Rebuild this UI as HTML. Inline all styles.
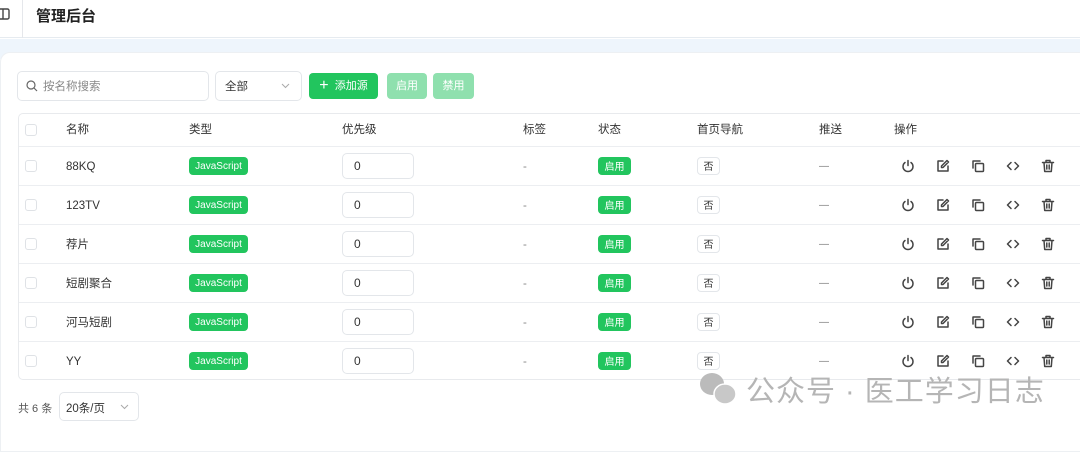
<!DOCTYPE html>
<html><head><meta charset="utf-8"><style>
*{box-sizing:border-box;margin:0;padding:0}
body{width:1080px;height:433px;overflow:hidden;background:#fff;font-family:"Liberation Sans","Noto Sans CJK SC",sans-serif;font-size:12px;color:#333;position:relative}
.hdr{position:absolute;left:0;top:0;width:1080px;height:38px;border-bottom:1px solid #e6ebf0;background:#fff}
.hdr .sep{position:absolute;left:22px;top:0;width:1px;height:38px;background:#e5e7eb}
.hdr .t{position:absolute;left:36px;top:5px;font-size:15px;font-weight:bold;color:#222}
.band{position:absolute;left:0;top:39px;width:1080px;height:20px;background:#eef5fc}
.card{position:absolute;left:0;top:52px;width:1090px;height:400px;background:#fff;border-radius:10px 0 0 0;border:1px solid #edf0f3}
.abs{position:absolute}
.inp{border:1px solid #e3e6ea;border-radius:5px;background:#fff}
.btn{position:absolute;height:26px;border-radius:4px;color:#fff;font-size:11px;line-height:26px;text-align:center}
.tbl{position:absolute;left:18px;top:113px;width:1070px;height:267px;border:1px solid #e8eaed;border-radius:5px}
.row{position:absolute;left:0;width:1070px;height:39px;border-top:1px solid #eceef1}
.cb{position:absolute;left:7px;width:12px;height:12px;border:1px solid #dfe2e6;border-radius:3px}
.cell{position:absolute;top:0;font-size:11.5px;color:#333;line-height:40px}
.hd .cell{line-height:32px}
.bd{position:absolute;display:flex;align-items:center;justify-content:center;top:10px;height:18px;border-radius:4px;font-size:10px}
.js{left:170px;width:59px;background:#22c55e;color:#fff}
.pri{position:absolute;left:323px;top:6px;width:72px;height:26px;border:1px solid #e3e6ea;border-radius:5px;padding-left:11px;line-height:25px;font-size:12px}
.st{left:579px;width:33px;background:#22c55e;color:#fff;padding-bottom:2px}
.no{left:678px;width:23px;border:1px solid #e3e6ea;padding-bottom:2px}
svg.ic{position:absolute;top:12px;width:14px;height:14px;fill:none;stroke:#444;stroke-width:1.5;stroke-linecap:round;stroke-linejoin:round}
</style></head><body>
<div class="hdr"><svg style="position:absolute;left:0;top:8px" width="10" height="12" viewBox="0 0 10 12"><rect x="-4" y="1" width="13" height="10" rx="1.5" fill="none" stroke="#444" stroke-width="1.4"/><line x1="3" y1="1" x2="3" y2="11" stroke="#444" stroke-width="1.4"/></svg><div class="sep"></div><div class="t">管理后台</div></div>
<div class="band"></div>
<div class="card"></div>
<div class="abs inp" style="left:17px;top:71px;width:192px;height:30px"></div>
<svg class="abs" style="left:26px;top:80px" width="12" height="12" viewBox="0 0 12 12"><circle cx="5" cy="5" r="4" fill="none" stroke="#666" stroke-width="1.2"/><line x1="8" y1="8" x2="11" y2="11" stroke="#666" stroke-width="1.2"/></svg>
<div class="abs" style="left:43px;top:78px;font-size:11.5px;color:#888">按名称搜索</div>
<div class="abs inp" style="left:215px;top:71px;width:87px;height:30px"></div>
<div class="abs" style="left:225px;top:78px;font-size:11.5px">全部</div>
<svg class="abs" style="left:281px;top:83px" width="9" height="6" viewBox="0 0 9 6"><path d="M1 1l3.5 3.5L8 1" fill="none" stroke="#aaa" stroke-width="1"/></svg>
<div class="btn" style="left:309px;top:73px;width:69px;background:#22c55e"><span style="font-size:16px;vertical-align:-1px">+</span>&nbsp;&nbsp;添加源</div>
<div class="btn" style="left:387px;top:73px;width:40px;background:#8fe0ae">启用</div>
<div class="btn" style="left:433px;top:73px;width:41px;background:#8fe0ae">禁用</div>
<div class="tbl">
<div class="hd">
<div class="cb" style="top:10px;left:6px"></div>
<div class="cell" style="left:47px">名称</div>
<div class="cell" style="left:170px">类型</div>
<div class="cell" style="left:323px">优先级</div>
<div class="cell" style="left:504px">标签</div>
<div class="cell" style="left:579px">状态</div>
<div class="cell" style="left:678px">首页导航</div>
<div class="cell" style="left:800px">推送</div>
<div class="cell" style="left:875px">操作</div>
</div>
<div class="row" style="top:32px"><div class="cb" style="top:13px;left:6px"></div><div class="cell nm" style="left:47px">88KQ</div><div class="bd js">JavaScript</div><div class="pri">0</div><div class="cell" style="left:504px;color:#888">-</div><div class="bd st">启用</div><div class="bd no">否</div><div class="cell" style="left:800px;color:#777;font-size:10px">—</div>
<svg class="ic" style="left:882px" viewBox="0 0 14 14"><path d="M7 1.5v5M4 3.5a5 5 0 1 0 6 0"/></svg><svg class="ic" style="left:917px" viewBox="0 0 14 14"><path d="M7 2H2v10h10V7M11 1.5l1.5 1.5L7 8.5H5.5V7z"/></svg><svg class="ic" style="left:952px" viewBox="0 0 14 14"><rect x="4.5" y="4.5" width="8" height="8" rx="1"/><path d="M2 9V2h7"/></svg><svg class="ic" style="left:987px" viewBox="0 0 14 14"><path d="M5 3.5L1.5 7 5 10.5M9 3.5L12.5 7 9 10.5"/></svg><svg class="ic" style="left:1022px" viewBox="0 0 14 14"><path d="M1.5 3.5h11M5 3.5V1.5h4v2M3 3.5l.7 9h6.6l.7-9M5.8 6v4M8.2 6v4"/></svg></div>
</div>
<div class="abs" style="left:18px;top:400px;font-size:11px;color:#555">共 6 条</div>
<div class="abs inp" style="left:59px;top:392px;width:80px;height:29px"></div>
<div class="abs" style="left:66px;top:400px;font-size:11.5px">20条/页</div>
<svg class="abs" style="left:120px;top:404px" width="9" height="6" viewBox="0 0 9 6"><path d="M1 1l3.5 3.5L8 1" fill="none" stroke="#aaa" stroke-width="1"/></svg>
<div class="abs" style="left:698px;top:370px;width:42px;height:38px"><svg width="42" height="38" viewBox="0 0 42 38"><ellipse cx="14" cy="14" rx="12" ry="11" fill="#bbb"/><ellipse cx="27" cy="24" rx="11" ry="10" fill="#c8c8c8" stroke="#fff" stroke-width="1.5"/></svg></div>
<div class="abs" style="left:746px;top:368px;font-size:29px;color:#b5b5b5;letter-spacing:1px">公众号 · 医工学习日志</div>
<script>
var names=["88KQ","123TV","荐片","短剧聚合","河马短剧","YY"];
var t=document.querySelector('.tbl'),tpl=t.querySelector('.row');
for(var i=1;i<6;i++){var r=tpl.cloneNode(true);r.style.top=(32+39*i)+'px';r.querySelector('.nm').textContent=names[i];t.appendChild(r);}
</script>
</body></html>
